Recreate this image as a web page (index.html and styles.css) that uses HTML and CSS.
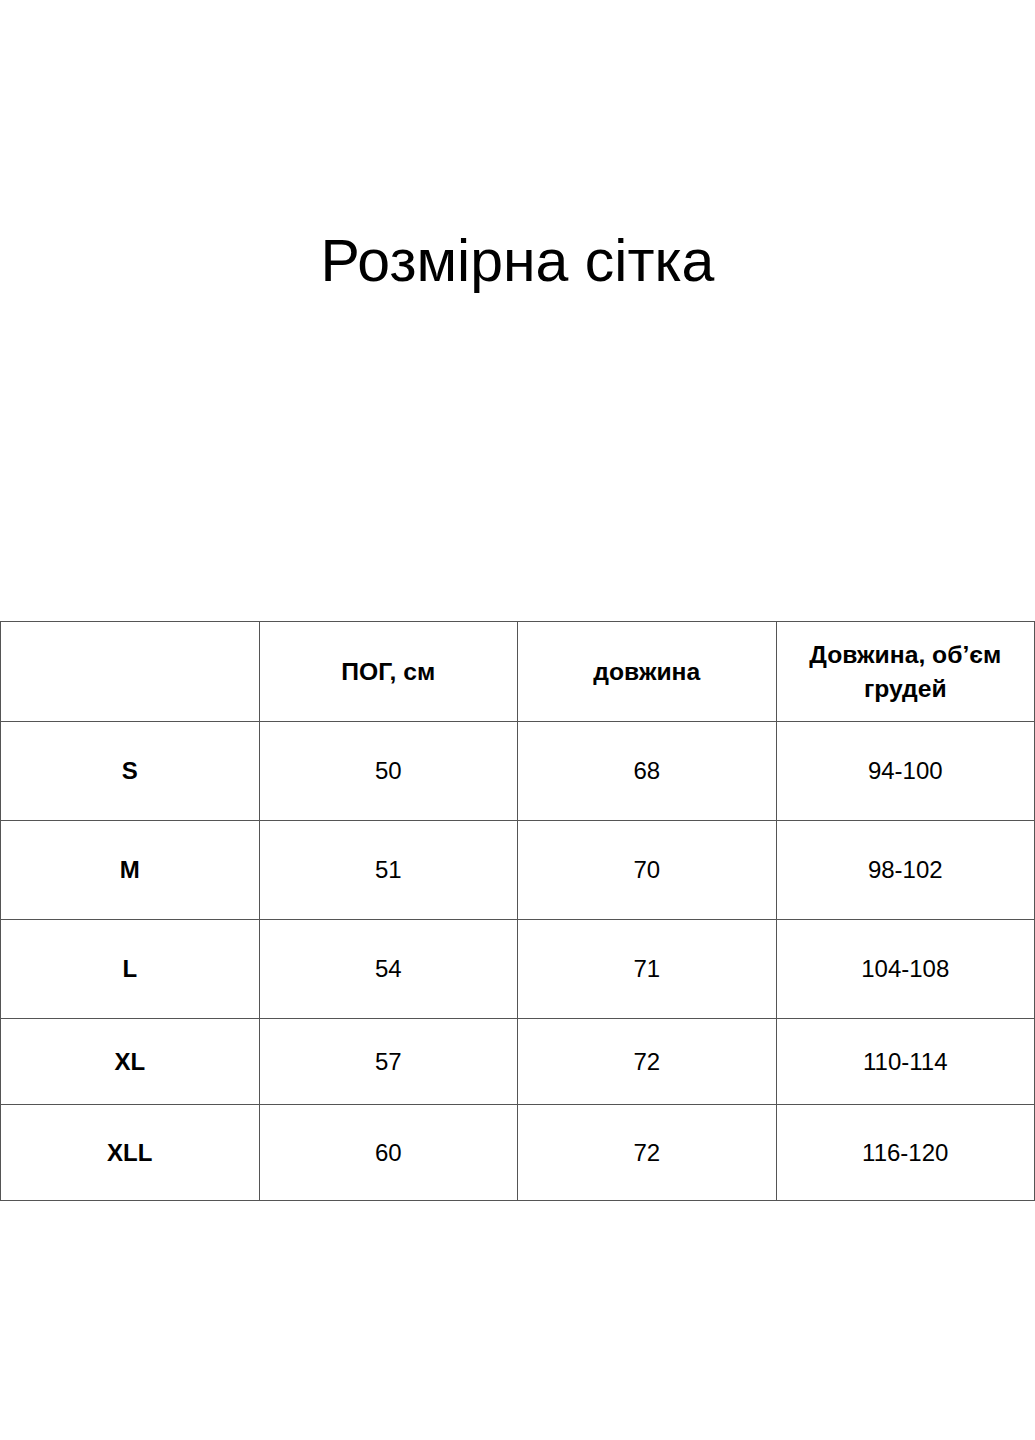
FILE: index.html
```html
<!DOCTYPE html>
<html lang="uk">
<head>
<meta charset="utf-8">
<title>Розмірна сітка</title>
<link rel="stylesheet" href="styles.css">
</head>
<body>
<main class="page">
  <h1 class="title">Розмірна сітка</h1>
  <table class="sizes">
    <tr class="row-head">
      <th></th>
      <th>ПОГ, см</th>
      <th>довжина</th>
      <th>Довжина, об’єм<br>грудей</th>
    </tr>
    <tr class="row-std">
      <th>S</th><td>50</td><td>68</td><td>94-100</td>
    </tr>
    <tr class="row-std">
      <th>M</th><td>51</td><td>70</td><td>98-102</td>
    </tr>
    <tr class="row-std">
      <th>L</th><td>54</td><td>71</td><td>104-108</td>
    </tr>
    <tr class="row-short">
      <th>XL</th><td>57</td><td>72</td><td>110-114</td>
    </tr>
    <tr class="row-last">
      <th>XLL</th><td>60</td><td>72</td><td>116-120</td>
    </tr>
  </table>
</main>
</body>
</html>
```

FILE: styles.css
```css
html, body {
  margin: 0;
  padding: 0;
  background: #ffffff;
}

.page {
  font-family: "Liberation Sans", Arial, sans-serif;
  color: #000;
  width: 1035px;
}

.title {
  margin: 227px 0 0 0;
  font-size: 59px;
  font-weight: 400;
  line-height: normal;
  text-align: center;
}

.sizes {
  margin-top: 326px;
  width: 1035px;
  border-collapse: collapse;
  table-layout: fixed;
}

.sizes th,
.sizes td {
  border: 1px solid #555;
  text-align: center;
  vertical-align: middle;
  font-size: 24px;
  line-height: 34px;
  padding: 0;
  width: 25%;
}

.sizes th {
  font-weight: 700;
}

.sizes td {
  font-weight: 400;
}

.row-head th {
  font-size: 24.7px;
}

.row-head { height: 100px; }
.row-std { height: 99px; }
.row-short { height: 86px; }
.row-last { height: 96px; }
```
